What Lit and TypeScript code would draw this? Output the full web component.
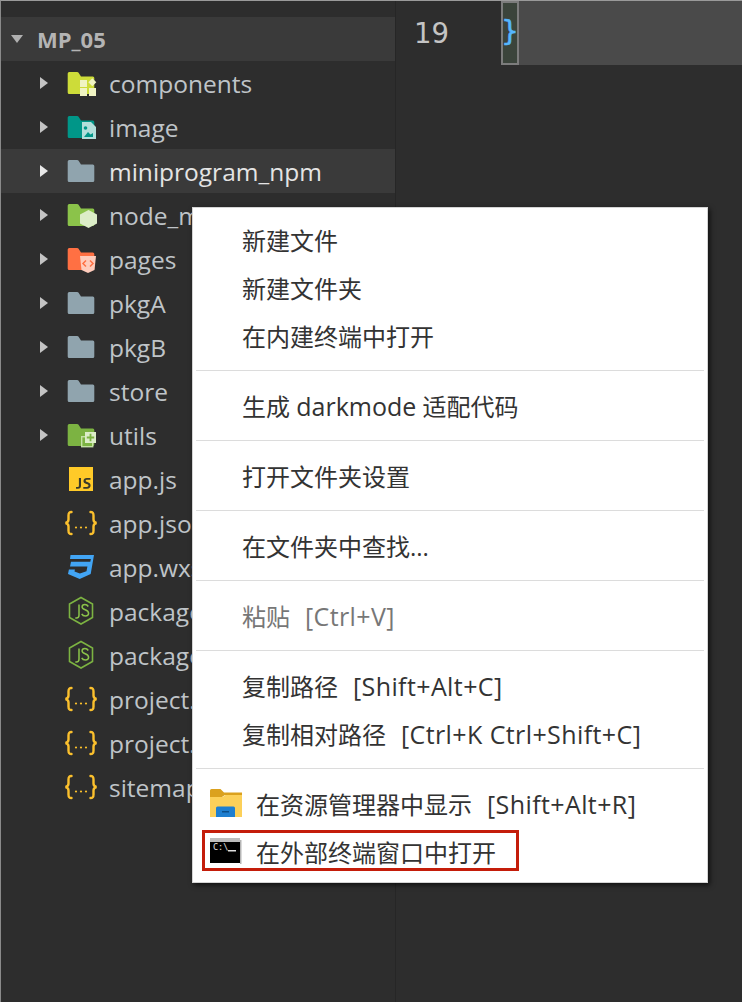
import { LitElement, html, css, svg } from "lit";
import { customElement } from "lit/decorators.js";

const folder = (c: string) => svg`<path d="M3.200 2h8a1.500 1.500 0 0 1 1.200.6L15 6.500h11.800a1.500 1.500 0 0 1 1.500 1.500v14.500a1.500 1.500 0 0 1-1.500 1.500H3.200a1.500 1.500 0 0 1-1.500-1.500V3.500A1.500 1.500 0 0 1 3.200 2z" fill="${c}"/>`;

const wrap = (s: unknown) => html`<svg class="ic" viewBox="0 0 30 30" width="30" height="30">${s}</svg>`;

const icons: Record<string, unknown> = {
  comp: wrap(svg`${folder("#cddc39")}
    <g fill="#f0f4c3"><rect x="14" y="10" width="7" height="7"/><rect x="14" y="18" width="7" height="8"/><rect x="23" y="18" width="7" height="8"/><path d="M26.300 8.300l4 4-4 4-4-4z"/></g>`),
  image: wrap(svg`${folder("#009688")}
    <path d="M16 8h9l5 5v12H16z" fill="#b2dfdb"/><path d="M18 23l4-5 2.500 2.500 2.500-1.500v4z" fill="#009688"/><circle cx="19.500" cy="14" r="1.800" fill="#009688"/>`),
  plain: wrap(folder("#90a4ae")),
  node: wrap(svg`${folder("#8bc34a")}<path d="M22.500 8l8.500 4.500v9L22.500 26 14 21.500v-9z" fill="#dcedc8"/>`),
  pages: wrap(svg`${folder("#ff7043")}
    <path d="M14 10h16l-1.500 14L22 27l-6.500-3z" fill="#ffccbc"/><path d="M20 14.500l-3 3 3 3M24 14.500l3 3-3 3" fill="none" stroke="#ff7043" stroke-width="1.500"/>`),
  utils: wrap(svg`${folder("#7cb342")}
    <rect x="15.700" y="14.700" width="11" height="10" fill="#7cb342" stroke="#c5e1a5" stroke-width="1.400"/>
    <rect x="19" y="10" width="11" height="11" fill="#dcedc8"/><path d="M24.500 11.800v7.400M20.800 15.500h7.400" stroke="#7cb342" stroke-width="1.800"/>`),
  js: wrap(svg`<rect x="3" y="1" width="24" height="24" fill="#ffca28"/>
    <path d="M15 12v7.800c0 2-1 3-3 3h-2v-1.800h1.500c.9 0 1.400-.4 1.400-1.300V12zM24.500 13.800h-3.700c-.7 0-1.100.3-1.100.9 0 .5.300.8 1 1.100l1.700.7c1.500.7 2.200 1.500 2.200 2.800 0 2-1.300 3.500-3.600 3.500h-3.700v-1.800h3.600c1 0 1.600-.6 1.600-1.400 0-.6-.4-1-1.200-1.300l-1.500-.6c-1.500-.6-2.300-1.500-2.300-2.800 0-1.800 1.300-2.900 3.300-2.900h3.700z" fill="#3a3a2a"/>`),
  json: wrap(svg`<g fill="none" stroke="#fbc02d" stroke-width="2.400" stroke-linecap="round">
    <path d="M5.500 2C3 2 2.500 3 2.500 5.500v4c0 2-1 3-3 3.500 2 .5 3 1.500 3 3.500v4c0 2.500.5 3.500 3 3.500"/>
    <path d="M24.500 2c2.500 0 3 1 3 3.500v4c0 2 1 3 3 3.500-2 .5-3 1.500-3 3.500v4c0 2.500-.5 3.500-3 3.500"/></g>
    <g fill="#fbc02d"><circle cx="10" cy="17.500" r="1.100"/><circle cx="15" cy="17.500" r="1.100"/><circle cx="20" cy="17.500" r="1.100"/></g>`),
  css: wrap(svg`<path d="M4.500 1H28l-3.300 19-11 5-11.700-5 .9-4.500h6l-.4 2 5.400 2 6.600-2.200.9-4.800H4l1-4.800h19.300l.6-2.700H4z" fill="#42a5f5"/>`),
  npm: wrap(svg`<path d="M15 -0.500l11.500 6.500v13.500L15 26 3.500 19.500V6z" fill="none" stroke="#7cb342" stroke-width="1.600"/>
    <path d="M13 6.500v10.800c0 1.800-1 2.700-2.500 2.700H9.300M22.300 8.500c-.8-1.300-1.900-2-3.400-2-1.700 0-2.800 1-2.800 2.500 0 3.600 6.500 2 6.500 6.300 0 1.600-1.300 2.700-3.200 2.700-1.800 0-3-.8-3.700-2.200" fill="none" stroke="#8bc34a" stroke-width="1.500"/>`),
};

const rows: [string, string, boolean][] = [
  ["comp", "components", true],
  ["image", "image", true],
  ["plain", "miniprogram_npm", true],
  ["node", "node_modules", true],
  ["pages", "pages", true],
  ["plain", "pkgA", true],
  ["plain", "pkgB", true],
  ["plain", "store", true],
  ["utils", "utils", true],
  ["js", "app.js", false],
  ["json", "app.json", false],
  ["css", "app.wxss", false],
  ["npm", "package.json", false],
  ["npm", "package-lock.json", false],
  ["json", "project.config.json", false],
  ["json", "project.private.config.json", false],
  ["json", "sitemap.json", false],
];

@customElement("app-root")
export class AppRoot extends LitElement {
  static styles = css`
    :host {
      display: block;
      width: 742px;
      height: 1002px;
      overflow: hidden;
      position: relative;
      background: #2d2d2d;
      font-family: "Open Sans", "Noto Sans CJK SC", sans-serif;
    }
    .frame {
      display: flex;
      height: 1002px;
      box-sizing: border-box;
      border-top: 1px solid #9a9a9a;
      border-left: 1px solid #8a8a8a;
    }
    .side {
      width: 395px;
      flex: none;
      box-sizing: border-box;
      padding-top: 16px;
      border-right: 1px solid #262626;
      background: #2d2d2d;
    }
    .head {
      height: 44px;
      display: flex;
      align-items: center;
      background: #3a3a3a;
      color: #b4b4b4;
      font-weight: 700;
      font-size: 22px;
      line-height: 44px;
      box-sizing: border-box;
    }
    .head .tw {
      width: 0;
      height: 0;
      margin-left: 10px;
      margin-right: 14px;
      border-left: 6px solid transparent;
      border-right: 6px solid transparent;
      border-top: 8px solid #b0b0b0;
    }
    .row {
      height: 44px;
      display: flex;
      align-items: center;
      color: #bfc4c8;
      font-size: 24.5px;
      white-space: nowrap;
    }
    .row.sel {
      background: #3a3a3a;
      color: #e4e4e4;
    }
    .arrow {
      width: 0;
      height: 0;
      margin-left: 39px;
      border-top: 6px solid transparent;
      border-bottom: 6px solid transparent;
      border-left: 8px solid #c4c4c4;
      flex: none;
    }
    .row.sel .arrow { border-left-color: #e8e8e8; }
    .noarrow { width: 8px; margin-left: 39px; flex: none; }
    .ic { flex: none; margin-left: 18px; margin-right: 13px; display: block; margin-top: 4px; overflow: visible; }
    .label { line-height: 44px; position: relative; top: 1px; }
    .editor { flex: 1; position: relative; }
    .line {
      height: 64px;
      display: flex;
    }
    .num {
      width: 105px;
      box-sizing: border-box;
      padding-left: 18px;
      color: #c4c4c4;
      font-family: "DejaVu Sans", sans-serif;
      font-size: 27.500px;
      line-height: 64px;
    }
    .brace {
      width: 18px;
      height: 64px;
      box-sizing: border-box;
      border: 2px solid #7c7c7c;
      background: #3b443b;
      color: #55b6ff;
      font-family: "DejaVu Sans Mono", monospace;
      font-size: 28px;
      -webkit-text-stroke: 0.5px #55b6ff;
      line-height: 58px;
      display: flex;
      justify-content: center;
    }
    .rest { flex: 1; background: #4a4a4a; }
    .menu {
      position: absolute;
      left: 192px;
      top: 207px;
      width: 516px;
      height: 676px;
      box-sizing: border-box;
      background: #fff;
      border: 1px solid #d4d4d4;
      box-shadow: 2px 2px 5px rgba(0, 0, 0, 0.65);
      padding-top: 9px;
      color: #333;
      font-size: 24px;
      display: flex;
      flex-direction: column;
    }
    .mi {
      height: 48px;
      line-height: 47px;
      padding-left: 49px;
      white-space: pre;
      flex: none;
    }
    .mi.dis { color: #777; }
    .lat { font-size: 25px; line-height: 0; }
    .key { font-size: 25px; line-height: 0; letter-spacing: 0.4px; margin-left: 2.500px; }
    .key.wide { margin-left: 15px; }
    .sep { height: 1px; background: #dcdcdc; margin: 9px 3px 12px 3px; flex: none; }
    .mi.icon {
      display: flex;
      align-items: flex-start;
      padding-left: 17px;
      gap: 14px;
      height: 48px;
    }
    .mi.icon svg { flex: none; display: block; margin-top: 8px; }
    .hl {
      position: absolute;
      left: 9px;
      top: 622px;
      width: 317px;
      height: 41px;
      box-sizing: border-box;
      border: 3px solid #c41d0a;
    }
  `;

  render() {
    return html`
      <div class="frame">
        <div class="side">
          <div class="head"><span class="tw"></span><span>MP_05</span></div>
          ${rows.map(
            ([ic, name, arrow]) => html`
              <div class="row ${name === "miniprogram_npm" ? "sel" : ""}">
                <span class="${arrow ? "arrow" : "noarrow"}"></span>
                ${icons[ic]}
                <span class="label">${name}</span>
              </div>
            `
          )}
        </div>
        <div class="editor">
          <div class="line">
            <div class="num">19</div>
            <div class="brace">}</div>
            <div class="rest"></div>
          </div>
        </div>
      </div>
      <div class="menu">
        <div class="mi">新建文件</div>
        <div class="mi">新建文件夹</div>
        <div class="mi">在内建终端中打开</div>
        <div class="sep"></div>
        <div class="mi">生成 <span class="lat">darkmode</span> 适配代码</div>
        <div class="sep"></div>
        <div class="mi">打开文件夹设置</div>
        <div class="sep"></div>
        <div class="mi">在文件夹中查找...</div>
        <div class="sep"></div>
        <div class="mi dis">粘贴  <span class="key">[Ctrl+V]</span></div>
        <div class="sep"></div>
        <div class="mi">复制路径  <span class="key">[Shift+Alt+C]</span></div>
        <div class="mi">复制相对路径  <span class="key">[Ctrl+K Ctrl+Shift+C]</span></div>
        <div class="sep"></div>
        <div class="mi icon">
          <svg viewBox="0 0 32 28" width="32" height="28">
            <path d="M0 1.500A1.500 1.500 0 0 1 1.500 0h9l3.500 3.500H32V6H15l-3 2H0z" fill="#dba11e"/>
            <path d="M0 8h12.500l3-2H32v22H0z" fill="#fcd059"/>
            <path d="M6 28v-9a1.500 1.500 0 0 1 1.500-1.500h16a1.500 1.500 0 0 1 1.500 1.500v9z" fill="#1e7fd0"/>
            <rect x="12" y="22" width="7" height="1.500" fill="#0b4f8a"/>
          </svg>
          <span>在资源管理器中显示<span class="key wide">[Shift+Alt+R]</span></span>
        </div>
        <div class="mi icon">
          <svg viewBox="0 0 32 28" width="32" height="28">
            <rect x="0" y="1" width="30" height="25" fill="#000"/>
            <rect x="0" y="1" width="30" height="4" fill="#bdbdbd"/>
            <rect x="30" y="3" width="1.500" height="24" fill="#b5b5b5"/>
            <text x="3" y="13" font-size="8.500" fill="#e0e0e0" font-family="DejaVu Sans Mono">C:\\</text>
            <rect x="18" y="13" width="8" height="1.500" fill="#e0e0e0"/>
          </svg>
          <span>在外部终端窗口中打开</span>
        </div>
        <div class="hl"></div>
      </div>
    `;
  }
}
